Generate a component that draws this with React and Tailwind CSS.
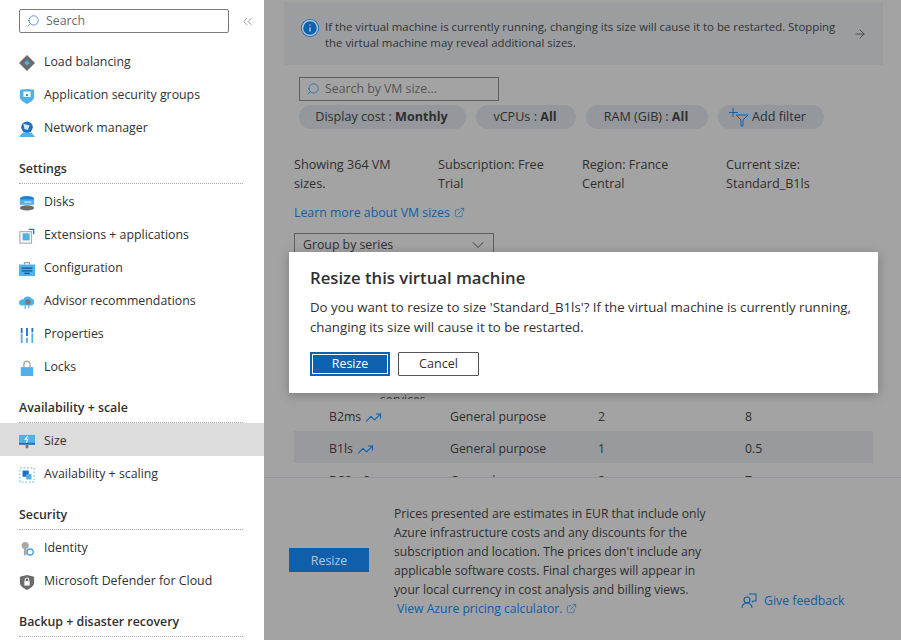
import React from "react";
import { Search, ChevronsLeft, ArrowRight, ChevronDown, ExternalLink, TrendingUp, Info } from "lucide-react";

const FONT = "font-['Open_Sans','Noto_Sans',sans-serif]";

// small azure-style blade icons, drawn by hand
const icons = {
  lb: (
    <>
      <path d="M9 0l9 9-9 9-9-9z" fill="#6b6b6b" />
      <path d="M9 6l3 3-3 3-3-3z" fill="#50b0e8" />
    </>
  ),
  asg: (
    <>
      <path d="M1 2l8-1 8 1v8c0 4-5 6-8 8-3-2-8-4-8-8z" fill="#50b0e8" />
      <path d="M5 4h8v6H5z" fill="#fff" />
      <path d="M8 7h2v2H8z" fill="#1f6fbf" />
    </>
  ),
  network: (
    <>
      <circle cx="9" cy="7" r="6.5" fill="#1f6fbf" />
      <path d="M5 3l7 2-2 5-4-1z" fill="#cfe6f7" />
      <path d="M0 18l4-5h10l4 5z" fill="#50b0e8" />
    </>
  ),
  disks: (
    <>
      <ellipse cx="9" cy="14.5" rx="8" ry="3" fill="#6b6b6b" />
      <ellipse cx="9" cy="4.5" rx="8" ry="3.5" fill="#1f7fd0" />
      <path d="M1 5h16v6H1z" fill="#50b0e8" />
      <path d="M6 8h8" stroke="#fff" />
    </>
  ),
  ext: (
    <>
      <path d="M1 4h13v13H1z" fill="none" stroke="#b0b0b0" strokeWidth="1.4" />
      <path d="M4 6h8v8H4z" fill="#50b0e8" />
      <path d="M11 1.5h5.5v5.5" fill="none" stroke="#1f6fbf" strokeWidth="1.4" />
    </>
  ),
  config: (
    <>
      <path d="M6 4V2h6v2" fill="none" stroke="#8a8a8a" strokeWidth="1.2" />
      <path d="M0 4h18v13H0z" fill="#50b0e8" />
      <path d="M3 8h12M3 11h12M6 14h6" stroke="#10508f" strokeWidth="1.4" />
    </>
  ),
  advisor: (
    <>
      <path d="M0 10c0-3 3-4 5-4 1-4 7-4 9-1 4 0 4 8 0 8H4c-2 0-4-1-4-3z" fill="#50b0e8" />
      <circle cx="10" cy="9" r="3" fill="#7a7a7a" />
      <path d="M7 13v4M11 13v3" stroke="#50b0e8" strokeWidth="1.4" />
    </>
  ),
  props: (
    <>
      <path d="M2 1h2v6H2zM8 1h2v9H8zM14 1h2v5h-2z" fill="#1f6fbf" />
      <path d="M2 8h2v10H2zM8 12h2v6H8zM14 7h2v11h-2z" fill="#50b0e8" />
    </>
  ),
  lock: (
    <>
      <path d="M5.5 8V5a3.5 3.5 0 017 0v3" fill="none" stroke="#a8a8a8" strokeWidth="1.6" />
      <path d="M2 8h14v10H2z" fill="#50b0e8" />
    </>
  ),
  size: (
    <>
      <path d="M0 1h18v11H0z" fill="#50b0e8" />
      <path d="M10 2l-3 4h3l-2 4" fill="none" stroke="#fff" strokeWidth="1.2" />
      <path d="M0 10h18v2H0z" fill="#1f6fbf" />
      <path d="M7.5 12h3v4h-3z" fill="#777" />
    </>
  ),
  scaling: (
    <>
      <path d="M1 1h16v16H1z" fill="none" stroke="#50b0e8" strokeDasharray="2 2" />
      <path d="M4 4h7v7H4z" fill="#1f6fbf" />
      <path d="M8 8h6v6H8z" fill="#50b0e8" />
    </>
  ),
  identity: (
    <>
      <circle cx="7" cy="5" r="4" fill="#a8a8a8" />
      <path d="M5.5 8h3v8h-3z" fill="#a8a8a8" />
      <circle cx="12.5" cy="12.5" r="3.5" fill="#fff" stroke="#50a0e0" strokeWidth="1.5" />
    </>
  ),
  defender: (
    <>
      <path d="M1 3l8-2 8 2v7c0 4-5 6-8 8-3-2-8-4-8-8z" fill="#6b6b6b" />
      <path d="M6 8h6v5H6z" fill="#fff" />
      <path d="M7 8V6.5a2 2 0 014 0V8" fill="none" stroke="#fff" strokeWidth="1.2" />
    </>
  ),
};

function BladeIcon({ name }) {
  return (
    <svg width="16" height="16" viewBox="0 0 18 18" className="shrink-0">
      {icons[name]}
    </svg>
  );
}

function NavItem({ icon, label, active }) {
  return (
    <div className={`h-[33px] pt-[4px] flex items-center gap-[9px] pl-[19px] ${active ? "bg-[#dcdcdc]" : ""}`}>
      <BladeIcon name={icon} />
      <span className="text-[12.35px] text-[#323130] whitespace-nowrap">{label}</span>
    </div>
  );
}

function NavHeading({ title }) {
  return (
    <div className="h-[41px] ml-[19px] mr-[21px] flex items-end pb-[4px] border-b border-dotted border-[#a8a8a8] text-[12.35px] font-semibold text-[#323130]">
      {title}
    </div>
  );
}

function Sidebar() {
  return (
    <aside className="w-[264px] shrink-0 h-full overflow-hidden bg-white">
      <div className="h-[44px] pt-[9px] pl-[19px] flex items-start">
        <div className="w-[210px] h-[24px] border border-[#7a7a7a] rounded-[2px] flex items-center pl-[6px] gap-[6px]">
          <Search size={14} strokeWidth={1.2} className="text-[#1f6fbf] -scale-x-100" />
          <span className="pt-[1px] text-[12.35px] text-[#6b6b6b]">Search</span>
        </div>
        <ChevronsLeft size={15} strokeWidth={1.1} className="text-[#666] ml-[11px] mt-[5px]" />
      </div>
      <NavItem icon="lb" label="Load balancing" />
      <NavItem icon="asg" label="Application security groups" />
      <NavItem icon="network" label="Network manager" />
      <NavHeading title="Settings" />
      <NavItem icon="disks" label="Disks" />
      <NavItem icon="ext" label="Extensions + applications" />
      <NavItem icon="config" label="Configuration" />
      <NavItem icon="advisor" label="Advisor recommendations" />
      <NavItem icon="props" label="Properties" />
      <NavItem icon="lock" label="Locks" />
      <NavHeading title="Availability + scale" />
      <NavItem icon="size" label="Size" active />
      <NavItem icon="scaling" label="Availability + scaling" />
      <NavHeading title="Security" />
      <NavItem icon="identity" label="Identity" />
      <NavItem icon="defender" label="Microsoft Defender for Cloud" />
      <NavHeading title="Backup + disaster recovery" />
    </aside>
  );
}

function Pill({ children, width }) {
  return (
    <div className={`${width} h-[24px] rounded-full bg-[#94979b] flex items-center justify-center text-[12.6px] text-[#2f2f2f] whitespace-nowrap`}>
      {children}
    </div>
  );
}

const ROWS = [
  { name: "B2ms", type: "General purpose", cpu: "2", ram: "8" },
  { name: "B1ls", type: "General purpose", cpu: "1", ram: "0.5", selected: true },
  { name: "DS2_v2", type: "General purpose", cpu: "2", ram: "7" },
];

function Content() {
  return (
    <div className="flex-1 min-h-0 overflow-hidden">
      <div className="ml-[20px] mr-[18px] mt-[2px] h-[63px] bg-[#9b9da0] flex items-center pl-[17px] pr-[16px]">
        <div className="w-[18px] h-[18px] rounded-full bg-[#0f62ad] flex items-center justify-center shrink-0 -mt-[12px]">
          <Info size={18} strokeWidth={2} className="text-[#a9c6e0]" />
        </div>
        <p className="ml-[6px] mt-[2px] w-[520px] text-[11.4px] leading-[15.5px] text-[#333]">
          If the virtual machine is currently running, changing its size will cause it to be restarted. Stopping the virtual machine may reveal additional sizes.
        </p>
        <ArrowRight size={14} strokeWidth={1.3} className="ml-auto text-[#333]" />
      </div>

      <div className="ml-[35px] mt-[12px] w-[200px] h-[24px] border border-[#5f5f5f] flex items-center pl-[6px] gap-[5px]">
        <Search size={14} strokeWidth={1.2} className="text-[#0f62ad] -scale-x-100" />
        <span className="text-[12.3px] text-[#555]">Search by VM size...</span>
      </div>
      <div className="ml-[35px] mt-[4px] flex gap-[10px]">
        <Pill width="w-[167px] pr-[2px]">Display cost :&nbsp;<b>Monthly</b></Pill>
        <Pill width="w-[100px] pr-[2px]">vCPUs :&nbsp;<b>All</b></Pill>
        <Pill width="w-[122px] pr-[2px]">RAM (GiB) :&nbsp;<b>All</b></Pill>
        <Pill width="w-[106px] pr-[8px]">
          <svg width="22" height="20" viewBox="0 0 22 20" className="mr-[2px]" fill="none" stroke="#0f62ad">
            <path d="M5 1v9M1 5.5h9M8 8h12l-5 5v6h-2v-6z" />
          </svg>
          Add filter
        </Pill>
      </div>

      <div className="ml-[30px] mt-[26px] grid grid-cols-[144px_144px_144px_144px] text-[12.6px] leading-[19px] text-[#2f2f2f]">
        <div className="pr-[30px]">Showing 364 VM sizes.</div>
        <div className="pr-[30px]">Subscription: Free Trial</div>
        <div className="pr-[40px]">Region: France Central</div>
        <div>Current size: Standard_B1ls</div>
      </div>
      <div className="ml-[30px] mt-[10px] flex items-center gap-[4px] text-[12.3px] leading-[19px] text-[#0f5ea8]">
        Learn more about VM sizes
        <ExternalLink size={11} strokeWidth={1.3} />
      </div>
      <div className="ml-[30px] mt-[11px] w-[200px] h-[24px] border border-[#5f5f5f] flex items-center justify-between pl-[8px] pr-[5px] text-[12.3px] text-[#2f2f2f]">
        Group by series
        <ChevronDown size={20} strokeWidth={1} />
      </div>

      <div className="ml-[116px] mt-[137px] h-[5px] overflow-hidden text-[12.3px] leading-[12px] text-[#333]">services</div>
      <div className="ml-[30px] w-[579px]">
        {ROWS.map((row) => (
          <div key={row.name} className={`h-[32px] pt-[4px] flex items-center text-[12.3px] text-[#2f2f2f] ${row.selected ? "bg-[#999a9e]" : ""}`}>
            <div className="w-[156px] pl-[35px] flex items-center gap-[4px]">
              {row.name}
              <TrendingUp size={17} strokeWidth={1.5} className="text-[#0f62ad]" />
            </div>
            <div className="w-[148px]">{row.type}</div>
            <div className="w-[147px]">{row.cpu}</div>
            <div>{row.ram}</div>
          </div>
        ))}
      </div>
    </div>
  );
}

function Footer() {
  return (
    <div className="h-[163px] shrink-0 border-t border-[#96969c] bg-[#a3a3a3] flex relative">
      <div className="ml-[25px] mt-[70px] w-[80px] h-[24px] pt-[2px] bg-[#0f5fab] flex items-center justify-center text-[12.4px] text-[#b9c6d4]">
        Resize
      </div>
      <div className="ml-[25px] mt-[26px] w-[325px] text-[12.15px] leading-[19px] text-[#2f2f2f]">
        Prices presented are estimates in EUR that include only Azure infrastructure costs and any discounts for the subscription and location. The prices don't include any applicable software costs. Final charges will appear in your local currency in cost analysis and billing views.
        <div className="pl-[3px] flex items-center gap-[4px] text-[#0f5ea8]">
          View Azure pricing calculator.
          <ExternalLink size={11} strokeWidth={1.3} />
        </div>
      </div>
      <div className="ml-[22px] mt-[113px] h-[20px] flex items-center gap-[7px] text-[12.3px] text-[#0f5ea8]">
        <svg width="16" height="16" viewBox="0 0 16 16" fill="none" stroke="#0f5ea8" strokeWidth="1.1">
          <path d="M8 1h7v7h-3l-1 1.5" />
          <circle cx="6" cy="7" r="3" />
          <path d="M1 15c0-3 2-5 5-5s5 2 5 5" />
        </svg>
        Give feedback
      </div>
    </div>
  );
}

function ResizeDialog() {
  return (
    <div className="absolute left-[25px] top-[252px] w-[589px] h-[141px] bg-white shadow-[0_2px_10px_rgba(0,0,0,0.25)] pl-[21px] pr-[20px] pt-[15px]">
      <h2 className="text-[16.7px] leading-[22px] font-semibold text-[#323130]">Resize this virtual machine</h2>
      <p className="mt-[8px] text-[13.25px] leading-[20px] text-[#323130]">
        Do you want to resize to size 'Standard_B1ls'? If the virtual machine is currently running, changing its size will cause it to be restarted.
      </p>
      <div className="mt-[15px] flex gap-[8px]">
        <div className="w-[80px] h-[24px] bg-[#0f62ad] flex items-center justify-center p-[2px]">
          <div className="w-full h-full border border-white flex items-center justify-center text-[12.4px] text-white">Resize</div>
        </div>
        <div className="w-[81px] h-[24px] border border-[#555] rounded-[1px] flex items-center justify-center text-[12.6px] text-[#323130]">Cancel</div>
      </div>
    </div>
  );
}

export default function App() {
  return (
    <div className={`${FONT} w-[901px] h-[640px] flex overflow-hidden`}>
      <Sidebar />
      <main className="relative flex-1 h-full bg-[#a3a3a3] flex flex-col">
        <Content />
        <Footer />
        <ResizeDialog />
      </main>
    </div>
  );
}
